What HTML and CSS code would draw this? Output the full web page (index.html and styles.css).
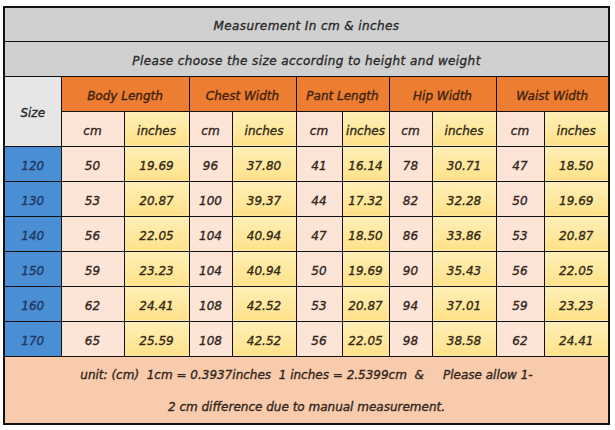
FILE: index.html
```html
<!DOCTYPE html>
<html>
<head>
<meta charset="utf-8">
<link rel="stylesheet" href="styles.css">
</head>
<body>
<table class="chart">
<colgroup>
<col class="c-size"><col class="w63"><col class="w65"><col class="w43"><col class="w64"><col class="w46"><col class="w47"><col class="w43"><col class="w64"><col class="w48"><col class="w65">
</colgroup>
<tr class="r-first"><td colspan="11" class="title">Measurement In cm &amp; inches</td></tr>
<tr class="r-title"><td colspan="11" class="title">Please choose the size according to height and weight</td></tr>
<tr class="r-head">
<td rowspan="2" class="size-head">Size</td>
<td colspan="2" class="group">Body Length</td>
<td colspan="2" class="group">Chest Width</td>
<td colspan="2" class="group">Pant Length</td>
<td colspan="2" class="group">Hip Width</td>
<td colspan="2" class="group">Waist Width</td>
</tr>
<tr class="r-row">
<td class="cm">cm</td><td class="in">inches</td>
<td class="cm">cm</td><td class="in">inches</td>
<td class="cm">cm</td><td class="in">inches</td>
<td class="cm">cm</td><td class="in">inches</td>
<td class="cm">cm</td><td class="in">inches</td>
</tr>
<tr class="r-row"><td class="sz">120</td><td class="cm">50</td><td class="in">19.69</td><td class="cm">96</td><td class="in">37.80</td><td class="cm">41</td><td class="in">16.14</td><td class="cm">78</td><td class="in">30.71</td><td class="cm">47</td><td class="in">18.50</td></tr>
<tr class="r-row"><td class="sz">130</td><td class="cm">53</td><td class="in">20.87</td><td class="cm">100</td><td class="in">39.37</td><td class="cm">44</td><td class="in">17.32</td><td class="cm">82</td><td class="in">32.28</td><td class="cm">50</td><td class="in">19.69</td></tr>
<tr class="r-row"><td class="sz">140</td><td class="cm">56</td><td class="in">22.05</td><td class="cm">104</td><td class="in">40.94</td><td class="cm">47</td><td class="in">18.50</td><td class="cm">86</td><td class="in">33.86</td><td class="cm">53</td><td class="in">20.87</td></tr>
<tr class="r-row"><td class="sz">150</td><td class="cm">59</td><td class="in">23.23</td><td class="cm">104</td><td class="in">40.94</td><td class="cm">50</td><td class="in">19.69</td><td class="cm">90</td><td class="in">35.43</td><td class="cm">56</td><td class="in">22.05</td></tr>
<tr class="r-row"><td class="sz">160</td><td class="cm">62</td><td class="in">24.41</td><td class="cm">108</td><td class="in">42.52</td><td class="cm">53</td><td class="in">20.87</td><td class="cm">94</td><td class="in">37.01</td><td class="cm">59</td><td class="in">23.23</td></tr>
<tr class="r-row"><td class="sz">170</td><td class="cm">65</td><td class="in">25.59</td><td class="cm">108</td><td class="in">42.52</td><td class="cm">56</td><td class="in">22.05</td><td class="cm">98</td><td class="in">38.58</td><td class="cm">62</td><td class="in">24.41</td></tr>
<tr class="r-foot"><td colspan="11" class="foot">unit: (cm)  1cm = 0.3937inches  1 inches = 2.5399cm  &amp;     Please allow 1-<br>2 cm difference due to manual measurement.</td></tr>
</table>
</body>
</html>
```
FILE: styles.css
```css
html, body {
  margin: 0;
  padding: 0;
  background: #ffffff;
}
body {
  padding: 6px 0 0 3px;
  font-family: "DejaVu Sans", "Noto Sans", sans-serif;
  font-style: italic;
  font-size: 12px;
  color: #333333;
  -webkit-text-stroke: 0.35px currentColor;
}
.chart {
  border-collapse: collapse;
  table-layout: fixed;
  width: 605px;
  border: 2px solid #111;
}
.chart td {
  border: 1px solid #111;
  padding: 4px 0 0 0;
  text-align: center;
  vertical-align: middle;
  overflow: hidden;
  white-space: nowrap;
}
.c-size { width: 57px; }
.w63 { width: 63px; }
.w65 { width: 65px; }
.w43 { width: 43px; }
.w64 { width: 64px; }
.w46 { width: 46px; }
.w47 { width: 47px; }
.w48 { width: 48px; }
.r-first { height: 34px; }
.r-title, .r-head, .r-row { height: 35px; }
.r-foot { height: 67px; }
.chart .foot {
  padding: 2px 0 0 0;
  background: #f8cbad;
  color: #33261c;
  line-height: 32px;
  white-space: pre-wrap;
}
.title {
  background: #d0d0d0;
  color: #2a2a2a;
  letter-spacing: 0.4px;
}
.size-head {
  background: #e6e6e6;
  color: #2a2a2a;
}
.group {
  background: #ed7d31;
  color: #3e2410;
}
.cm {
  background: #fce4d6;
  color: #33261c;
}
.in {
  background: linear-gradient(#fff0b8, #ffe189);
  color: #332a14;
}
.sz {
  background: #4a8ed3;
  color: #1f3864;
}
```
